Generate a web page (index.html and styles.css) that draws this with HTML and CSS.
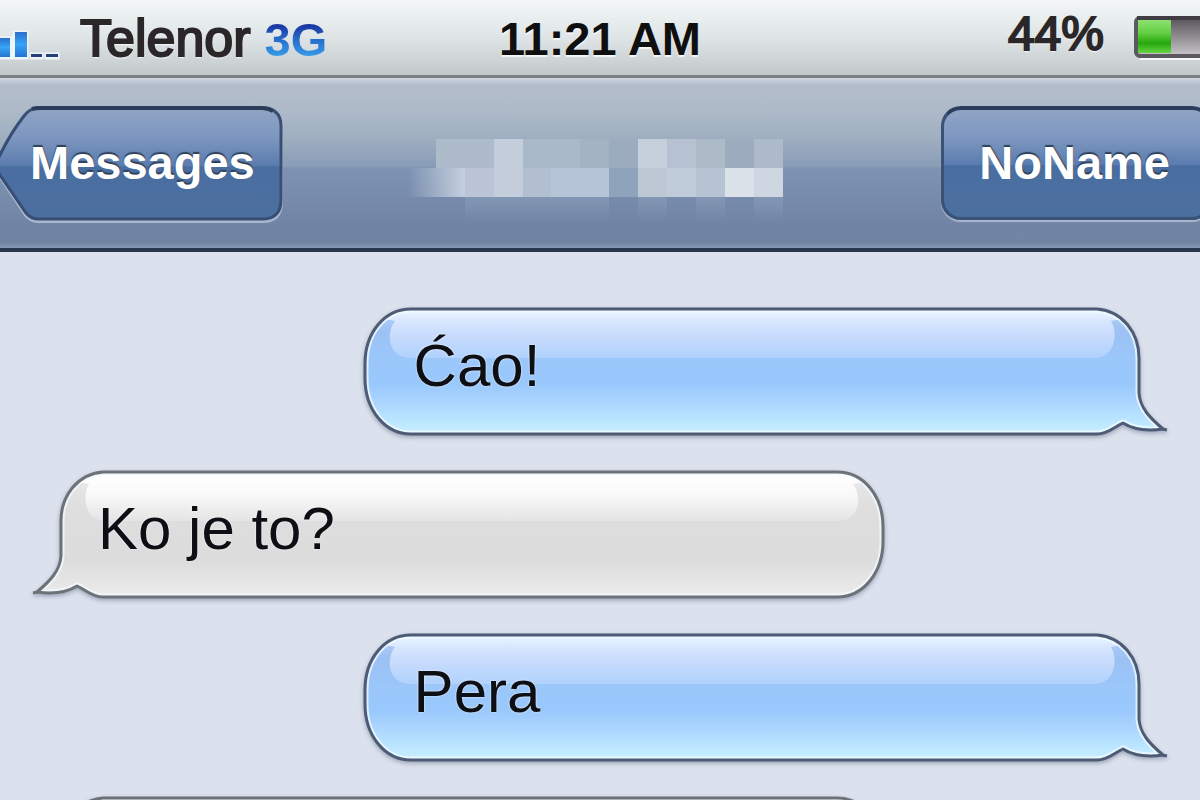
FILE: index.html
```html
<!DOCTYPE html>
<html lang="sr-Latn">
<head>
<meta charset="utf-8">
<meta name="viewport" content="width=device-width, initial-scale=1">
<title>Messages</title>
<link rel="stylesheet" href="styles.css">
</head>
<body>
<svg class="defs" aria-hidden="true">
  <defs>
    <linearGradient id="blueBase" gradientUnits="userSpaceOnUse" x1="0" y1="0" x2="0" y2="130">
      <stop offset="0" stop-color="#b9d3f8"/><stop offset=".2" stop-color="#9cc1f4"/><stop offset=".42" stop-color="#9bc7fb"/><stop offset=".6" stop-color="#99c8fc"/><stop offset=".75" stop-color="#add6ff"/><stop offset=".9" stop-color="#bde8ff"/><stop offset="1" stop-color="#cdf1ff"/>
    </linearGradient>
    <linearGradient id="blueGloss" gradientUnits="userSpaceOnUse" x1="0" y1="5" x2="0" y2="52">
      <stop offset="0" stop-color="#e9f6ff"/><stop offset=".2" stop-color="#d9e7ff"/><stop offset=".5" stop-color="#c9dcfd"/><stop offset="1" stop-color="#b0d2fd"/>
    </linearGradient>
    <linearGradient id="grayBase" gradientUnits="userSpaceOnUse" x1="0" y1="0" x2="0" y2="130">
      <stop offset="0" stop-color="#ececee"/><stop offset=".3" stop-color="#dedede"/><stop offset=".7" stop-color="#dcdcdc"/><stop offset="1" stop-color="#ededed"/>
    </linearGradient>
    <linearGradient id="grayGloss" gradientUnits="userSpaceOnUse" x1="0" y1="5" x2="0" y2="52">
      <stop offset="0" stop-color="#ffffff"/><stop offset=".4" stop-color="#fafafa"/><stop offset="1" stop-color="#e4e4e4"/>
    </linearGradient>
    <linearGradient id="buttonFill" x1="0" y1="0" x2="0" y2="1">
      <stop offset="0" stop-color="#8fa3c4"/><stop offset=".25" stop-color="#7f98c0"/><stop offset=".52" stop-color="#5b7caf"/><stop offset=".53" stop-color="#4b6ea2"/><stop offset="1" stop-color="#4b6f9e"/>
    </linearGradient>
    <linearGradient id="barFill" x1="0" y1="0" x2="0" y2="1">
      <stop offset="0" stop-color="#2a70cc"/><stop offset=".5" stop-color="#38a4f5"/><stop offset="1" stop-color="#2273d2"/>
    </linearGradient>
    <linearGradient id="charge" x1="0" y1="0" x2="0" y2="1">
      <stop offset="0" stop-color="#8de070"/><stop offset=".4" stop-color="#62cf42"/><stop offset=".7" stop-color="#25a70d"/><stop offset="1" stop-color="#66d544"/>
    </linearGradient>
    <linearGradient id="cell" x1="0" y1="0" x2="0" y2="1">
      <stop offset="0" stop-color="#57535a"/><stop offset="1" stop-color="#c9c7cb"/>
    </linearGradient>
    <linearGradient id="fadeIn" x1="0" y1="0" x2="1" y2="0">
      <stop offset="0" stop-color="#c5d0df" stop-opacity="0"/><stop offset="1" stop-color="#c5d0df"/>
    </linearGradient>
    <linearGradient id="fadeDown" x1="0" y1="0" x2="0" y2="1">
      <stop offset="0" stop-color="#a5b9d0" stop-opacity=".25"/><stop offset="1" stop-color="#a5b9d0" stop-opacity="0"/>
    </linearGradient>
    <path id="round" d="M62 3H50C24 3 4 26 4 58V72C4 104 24 128 50 128H62"/>
    <path id="tail" d="M-2 3H17C42 5 59 26 59 52V87C60 102 70 112 83 123C68 125 54 124 43 117C34 121 28 128 17 128H-2"/>
    <clipPath id="roundClip"><use href="#round"/></clipPath>
    <clipPath id="tailClip"><use href="#tail"/></clipPath>
    <symbol id="capRound" viewBox="0 0 60 130">
      <g clip-path="url(#roundClip)">
        <use href="#round" class="base"/>
        <path class="gloss" d="M60 3H42L24 13L34 15C25 26 26 52 50 52H60Z"/>
        <use href="#round" class="rim"/>
      </g>
      <use href="#round" class="edge"/>
    </symbol>
    <symbol id="capTail" viewBox="0 0 90 130">
      <g clip-path="url(#tailClip)">
        <use href="#tail" class="base"/>
        <path class="gloss" d="M0 3H22L42 13L31 15C38 26 36 52 14 52H0Z"/>
        <use href="#tail" class="rim"/>
      </g>
      <use href="#tail" class="edge"/>
      <path class="tip" d="M82 123L87 124"/>
    </symbol>
    <symbol id="span" viewBox="0 0 10 130" preserveAspectRatio="none">
      <rect class="base" y="3" width="10" height="125"/>
      <rect class="gloss" y="3" width="10" height="49"/>
      <path class="rim" d="M-9 5H19M-9 126H19"/>
      <path class="edge" d="M-9 3H19M-9 128H19"/>
    </symbol>
  </defs>
</svg>

<div class="phone">
  <header class="status">
    <div class="carrier">
      <svg class="signal" width="62" height="30" viewBox="0 0 62 30" role="img" aria-label="Signal strength">
        <g fill="none" stroke="#eef5fa" stroke-width="3"><path d="M-2 8H11V28H-2M14 2H27V28H14ZM31 24H42V28H31ZM46 24H58V28H46Z"/></g>
        <path fill="url(#barFill)" d="M-2 8H10V27H-2Z"/><path fill="url(#barFill)" d="M15 2H27V27H15Z"/>
        <path fill="#263f79" d="M31 24H42V27H31ZM46 24H58V27H46Z"/>
      </svg>
      <span class="operator">Telenor</span>
      <span class="network">3G</span>
    </div>
    <time class="clock">11:21 AM</time>
    <div class="power">
      <span class="percent">44%</span>
      <svg class="battery" width="66" height="44" viewBox="0 0 66 44" role="img" aria-label="Battery 44%">
        <path d="M70 43H6" stroke="#f6f8f8" stroke-width="3"/>
        <rect x="2" y="2" width="90" height="38" rx="4" fill="url(#cell)" stroke="#5b595f" stroke-width="4"/>
        <rect x="4" y="4" width="33" height="33" fill="url(#charge)"/>
        <path d="M3 2H66" stroke="#3f3d43" stroke-width="4"/>
      </svg>
    </div>
  </header>

  <nav class="bar">
    <button class="nav-button back" type="button">
      <svg width="286" height="120" viewBox="0 0 286 120" aria-hidden="true">
        <path d="M36 5H262Q281 5 281 24V98Q281 117 262 117H38Q31 117 26 111L0 72Q-5 62 0 53L24 13Q29 5 36 5Z" fill="none" stroke="#a9b8ce" stroke-width="4"/>
        <path d="M38 4H262Q281 4 281 22V96Q281 115 262 115H38Q31 115 26 109L0 71Q-6 61 0 51Q10 30 24 12Q30 4 38 4Z" fill="url(#buttonFill)" stroke="#384e74" stroke-width="3"/>
        <path d="M32 5Q35 4 40 4H262Q268 4 273 7" fill="none" stroke="#2c3d5b" stroke-width="4"/>
      </svg>
      <span>Messages</span>
    </button>
    <svg class="contact" width="400" height="90" viewBox="400 138 400 90" role="img" aria-label="Contact name hidden">
      <path fill="url(#fadeIn)" d="M408 168H465V197H408Z"/>
      <path fill="#adbbcb" d="M436 139H494V168H436Z"/><path fill="#c3cddb" d="M494 139H523V197H494Z"/>
      <path fill="#bbc5d5" d="M465 168H494V197H465Z"/><path fill="#aab9ca" d="M523 139H580V168H523Z"/><path fill="#a4b3c4" d="M580 139H609V168H580Z"/>
      <path fill="#b1bfd1" d="M523 168H551V197H523Z"/><path fill="#b6c4d7" d="M551 168H609V197H551Z"/>
      <path fill="#9bacbf" d="M609 139H638V168H609Z"/><path fill="#8fa3bd" d="M609 168H638V197H609Z"/>
      <path fill="#c6d0dd" d="M638 139H667V168H638Z"/><path fill="#b6c2d1" d="M667 139H696V168H667Z"/><path fill="#adbbc9" d="M696 139H725V168H696Z"/>
      <path fill="#9cacbe" d="M725 139H754V168H725Z"/><path fill="#adbac9" d="M754 139H783V168H754Z"/>
      <path fill="#bec8d5" d="M638 168H667V197H638Z"/><path fill="#c1ccda" d="M667 168H696V197H667Z"/><path fill="#b5c3d3" d="M696 168H725V197H696Z"/>
      <path fill="#dce2ea" d="M725 168H754V197H725Z"/><path fill="#cdd6e1" d="M754 168H783V197H754Z"/>
      <path fill="url(#fadeDown)" d="M465 197H609V222H465ZM638 197H667V222H638ZM696 197H725V222H696ZM754 197H783V222H754Z"/>
    </svg>
    <button class="nav-button contact-button" type="button"><span>NoName</span></button>
  </nav>

  <main class="thread">
    <article class="bubble sent">
      <svg class="first"><use href="#capRound"/></svg>
      <svg class="middle"><use href="#span"/></svg>
      <svg class="last"><use href="#capTail"/></svg>
      <p>Ćao!</p>
    </article>
    <article class="bubble received">
      <svg class="first flip"><use href="#capTail"/></svg>
      <svg class="middle"><use href="#span"/></svg>
      <svg class="last flip"><use href="#capRound"/></svg>
      <p>Ko je to?</p>
    </article>
    <article class="bubble sent">
      <svg class="first"><use href="#capRound"/></svg>
      <svg class="middle"><use href="#span"/></svg>
      <svg class="last"><use href="#capTail"/></svg>
      <p>Pera</p>
    </article>
    <article class="bubble received">
      <svg class="first flip"><use href="#capTail"/></svg>
      <svg class="middle"><use href="#span"/></svg>
      <svg class="last flip"><use href="#capRound"/></svg>
    </article>
  </main>
</div>
</body>
</html>
```
FILE: styles.css
```css
* { box-sizing: border-box; }

body {
  margin: 0;
  background: #dbe1ed;
  font-family: "Liberation Sans", Arial, sans-serif;
  color: #0d0f14;
}

.defs { position: absolute; width: 0; height: 0; }

.phone {
  height: 100vh;
  display: flex;
  flex-direction: column;
  overflow: hidden;
}

.status {
  display: grid;
  grid-template-columns: 1fr auto 1fr;
  align-items: center;
  flex: none;
  height: 78px;
  border-bottom: 3px solid #7c8084;
  background: linear-gradient(#f2f6f7, #dfe4e6 50%, #c3c9cb);
  white-space: nowrap;
  text-shadow: 0 2px 1px #f4f7f8;
}

.carrier { display: flex; align-items: center; }
.signal { margin: 14px 18px 0 0; }

.operator, .percent {
  color: #2b2728;
  font-size: 48px;
  line-height: 58px;
  -webkit-text-stroke: 2px #2b2728;
}

.operator { font-size: 52px; }

.network {
  margin-left: 14px;
  padding-top: 4px;
  font-size: 47px;
  font-weight: bold;
  line-height: 58px;
  background: linear-gradient(#172a9a 25%, #2668c8 50%, #3aa5ee 85%);
  -webkit-background-clip: text;
  background-clip: text;
  color: transparent;
  text-shadow: none;
}

.clock {
  padding-top: 2px;
  font-size: 47px;
  font-weight: bold;
  color: #100f10;
}

.power { display: flex; justify-content: flex-end; align-items: center; }
.percent { padding-bottom: 8px; }
.battery { margin-left: 30px; }

.bar {
  display: grid;
  grid-template-columns: 1fr auto 1fr;
  align-items: center;
  flex: none;
  height: 174px;
  border-bottom: 4px solid #28364f;
  background: linear-gradient(#d0d6e1, #b4bdcc 4%, #aebac8 18%, #a0b0c1 34%, #8a9db7 52%, #7e93b3 53%, #7083a4 88%, #7185a3 97%, #8799b3);
}

.nav-button {
  border: 0;
  padding: 0;
  background: none;
  color: #fff;
  font: bold 47px/54px "Liberation Sans", Arial, sans-serif;
  text-shadow: 0 -2px 1px #2f4059;
}

.nav-button span { padding-bottom: 2px; }

.back { display: grid; justify-self: start; align-items: center; justify-items: start; margin-top: 2px; }
.back > * { grid-area: 1 / 1; }
.back span { padding-left: 30px; }

.contact { display: block; margin-top: 40px; }

.contact-button {
  justify-self: end;
  display: flex;
  align-items: center;
  height: 114px;
  margin-right: -12px;
  padding: 0 39px 0 35px;
  border: 3px solid #3b5277;
  border-top: 4px solid #2c3d5b;
  border-radius: 20px;
  background: linear-gradient(#8fa3c4, #7f98c0 25%, #5b7caf 51%, #4b6ea2 52%, #4b6f9e);
  box-shadow: 0 2px 1px #a9b8ce;
}

.thread {
  display: flex;
  flex-direction: column;
  gap: 33px;
  padding: 54px 30px 0;
}

.bubble {
  --edge: #4e5b75;
  --base: url(#blueBase);
  --gloss: url(#blueGloss);
  display: grid;
  grid-template-columns: 60px 1fr 90px;
  flex: none;
  height: 130px;
  filter: drop-shadow(0 2px 2px #9ca5b8);
}

.bubble svg { display: block; width: 100%; height: 130px; grid-row: 1; }
.bubble .first { grid-column: 1; }
.bubble .middle { grid-column: 2; }
.bubble .last { grid-column: 3; }
.bubble .flip { transform: scaleX(-1); }

.sent { align-self: flex-end; width: 71%; }

.received {
  --edge: #6e7178;
  --base: url(#grayBase);
  --gloss: url(#grayGloss);
  grid-template-columns: 90px 1fr 60px;
  width: 75.2%;
}

.bubble p {
  grid-area: 1 / 1 / 2 / -1;
  align-self: center;
  z-index: 1;
  margin: 0;
  padding: 0 60px 10px 53px;
  font-size: 60px;
  line-height: 70px;
  text-shadow: 0 0 2px #fff;
}

.received p { padding-left: 68px; }

.base { fill: var(--base); }
.gloss { fill: var(--gloss); }
.rim { fill: none; stroke: #f0faff; stroke-width: 7px; stroke-opacity: 0.8; }
#span .rim { stroke-width: 3px; }
.edge { fill: none; stroke: var(--edge); stroke-width: 3px; stroke-linejoin: round; }
.tip { stroke: var(--edge); stroke-width: 3px; }
```
